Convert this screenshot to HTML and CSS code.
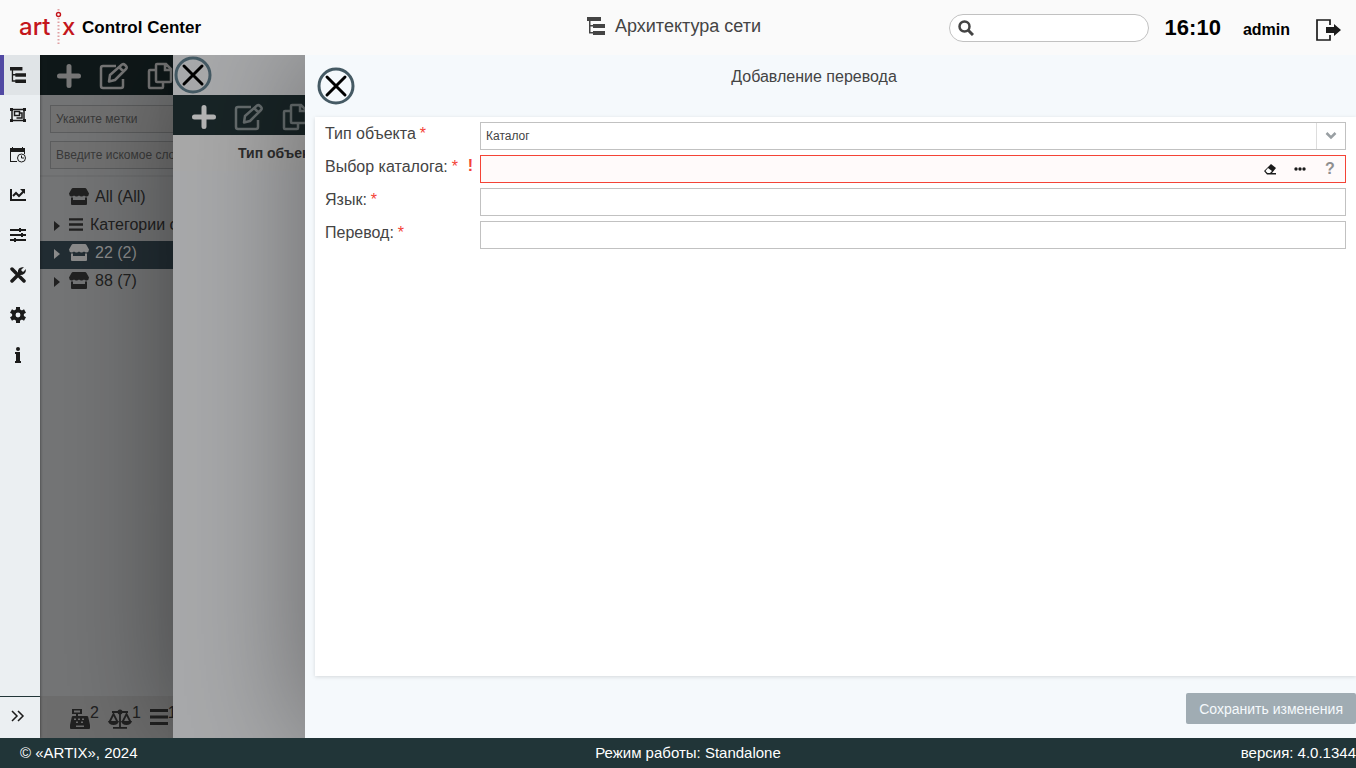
FILE: index.html
```html
<!DOCTYPE html>
<html lang="ru">
<head>
  <meta charset="UTF-8">
  <meta name="viewport" content="width=device-width, initial-scale=1.0">
  <title>Artix Control Center</title>
  <link rel="stylesheet" href="styles.css">
</head>
<body>
  <svg class="sprite" aria-hidden="true">
    <symbol id="i-tree" viewBox="0 0 18 18"><path d="M0 0h14v4H0zM6 7h12v4H6zM6 14h12v4H6zM2 4h1.500v4H6v1.500H3.500V15H6v1.500H2z"/></symbol>
    <symbol id="i-plus" viewBox="0 0 24 24"><path d="M12 2.500v19M2.500 12h19" fill="none" stroke="currentColor" stroke-width="5" stroke-linecap="round"/></symbol>
    <symbol id="i-edit" viewBox="0 0 30 28"><path d="M17 4H4a2 2 0 0 0-2 2v18a2 2 0 0 0 2 2h18a2 2 0 0 0 2-2v-7M11 13 23 2.500q1.500-1 3 .5l1 1q1.500 1.500 0 3L16 18l-6 1.500zM20 5l5 5" fill="none" stroke="currentColor" stroke-width="2.500" stroke-linejoin="round"/></symbol>
    <symbol id="i-copy" viewBox="0 0 26 28"><path d="M10 2h9l5 5v12a1 1 0 0 1-1 1H10a1 1 0 0 1-1-1V3a1 1 0 0 1 1-1zM18 2v6h6M8 8H3a1 1 0 0 0-1 1v16a1 1 0 0 0 1 1h12a1 1 0 0 0 1-1v-4" fill="none" stroke="currentColor" stroke-width="2.500"/></symbol>
    <symbol id="i-close" viewBox="0 0 38 38"><circle cx="19" cy="19" r="17" fill="none" stroke="#455a64" stroke-width="3"/><path d="m10 10 18 18M28 10 10 28" fill="none" stroke="#000" stroke-width="3" stroke-linecap="round"/></symbol>
    <symbol id="i-store" viewBox="0 0 20 17"><path d="M4 0h12q1 0 1.500 1L20 5.500Q20 8 17.500 8.500 16 8.500 15 7.500q-1 1-2.500 1T10 7.500q-1 1-2.500 1T5 7.500q-1 1-2.500 1Q0 8 0 5.500L2.500 1Q3 0 4 0zM2 9.500h2V12h12V9.500h2V16q0 1-1 1H3q-1 0-1-1z"/></symbol>
    <symbol id="i-list" viewBox="0 0 18 16"><path d="M0 0h18v3H0zM0 6.500h18v3H0zM0 13h18v3H0z"/></symbol>
    <symbol id="i-caret" viewBox="0 0 6 10"><path d="M0 0 6 5 0 10z"/></symbol>
  </svg>

  <header class="header">
    <div class="brand">
      <svg class="logo" viewBox="0 0 58 40" role="img" aria-label="artix">
        <text x="-1" y="27" class="logo-text">art</text>
        <text x="42" y="27" class="logo-text">x</text>
        <circle cx="38.500" cy="6.500" r="2" fill="none" stroke="#c4161c" stroke-width="1.400"/>
        <path d="M38.500 1v2M38.500 10v28" stroke="#e0a0a2" stroke-width="2" stroke-dasharray="1.500 2"/>
      </svg>
      <span class="brand-name">Control Center</span>
    </div>
    <h1 class="section-title"><svg width="18" height="18"><use href="#i-tree"/></svg>Архитектура сети</h1>
    <div class="user">
      <label class="search">
        <svg width="16" height="16" viewBox="0 0 16 16"><circle cx="6.500" cy="6.500" r="5" fill="none" stroke="#444" stroke-width="2.500"/><path d="m10 10 5 5" stroke="#444" stroke-width="3"/></svg>
        <input type="search" aria-label="Поиск">
      </label>
      <span class="clock">16:10</span>
      <span class="login">admin</span>
      <button class="logout" type="button" aria-label="Выход">
        <svg width="26" height="22" viewBox="0 0 26 22"><path d="M14 6V1H1v20h13v-5" fill="none" stroke="#1b1b1b" stroke-width="1.700"/><path d="M10 8h8V5l7 6-7 6v-3h-8z"/></svg>
      </button>
    </div>
  </header>

  <main class="workspace">
    <nav class="sidebar">
      <a class="nav-item active" href="#" aria-label="Архитектура сети"><svg width="16" height="16"><use href="#i-tree"/></svg></a>
      <a class="nav-item" href="#" aria-label="Группы"><svg width="16" height="16" viewBox="0 0 16 16"><path d="M2 3v10M14 3v10M3 2.500h10M3 13.500h10" stroke="currentColor" stroke-width="1.500"/><path d="M0 1h3v3H0zM13 1h3v3h-3zM0 12h3v3H0zM13 12h3v3h-3z"/><path d="M4.500 4.500h5v4h-5zM10 6h2v5H6.500" fill="none" stroke="currentColor" stroke-width="1.500"/></svg></a>
      <a class="nav-item" href="#" aria-label="Расписание"><svg width="16" height="16" viewBox="0 0 16 16"><path d="M0 1h2V0h1v1h9V0h1v1h2v4H0zM0 5h1v9h6v1H0zM14 5h1v2h-1z"/><circle cx="11.500" cy="11" r="4" fill="none" stroke="currentColor"/><path d="M11.500 8.500V11h2.500" fill="none" stroke="currentColor"/></svg></a>
      <a class="nav-item" href="#" aria-label="Отчёты"><svg width="16" height="16" viewBox="0 0 16 16"><path d="M1 2v11h15M3 9l3-3 3 3 5-5" fill="none" stroke="currentColor" stroke-width="2"/><path d="M10 2h5v5z"/></svg></a>
      <a class="nav-item" href="#" aria-label="Параметры"><svg width="16" height="16" viewBox="0 0 16 16"><path d="M0 3h16M0 8h16M0 13h16M10 1v4M12 6v4M5 11v4" stroke="currentColor" stroke-width="2"/></svg></a>
      <a class="nav-item" href="#" aria-label="Инструменты"><svg width="16" height="16" viewBox="0 0 16 16"><path d="M2 14 10 6M2 2l4 4M10 10l4 4" stroke="currentColor" stroke-width="3.500" stroke-linecap="round"/><path d="m5 5 6 6" stroke="currentColor" stroke-width="2"/><path d="M8 6q-1-6 6-6l-3 3 2 2 3-3q0 6-6 6z"/></svg></a>
      <a class="nav-item" href="#" aria-label="Настройки"><svg width="16" height="16" viewBox="0 0 16 16"><circle cx="8" cy="8" r="4.200" fill="none" stroke="currentColor" stroke-width="3.500"/><path d="M8 0v3M8 13v3M1 4l3 1.700M12 10.300 15 12M1 12l3-1.700M12 5.700 15 4" stroke="currentColor" stroke-width="4"/></svg></a>
      <a class="nav-item" href="#" aria-label="Информация"><svg width="16" height="16" viewBox="0 0 16 16"><circle cx="8" cy="2" r="2"/><path d="M6 5h4v9h1v2H5v-2h1V7H5V5z"/></svg></a>
      <button class="nav-toggle" type="button" aria-label="Развернуть меню"><svg width="14" height="12" viewBox="0 0 14 12"><path d="m1 1 5 5-5 5M7 1l5 5-5 5" fill="none" stroke="currentColor" stroke-width="1.500"/></svg></button>
    </nav>

    <section class="tree-panel">
      <div class="toolbar">
        <button type="button" aria-label="Добавить"><svg width="24" height="24"><use href="#i-plus"/></svg></button>
        <button type="button" aria-label="Изменить"><svg width="30" height="28"><use href="#i-edit"/></svg></button>
        <button type="button" aria-label="Копировать"><svg width="26" height="28"><use href="#i-copy"/></svg></button>
      </div>
      <div class="filters">
        <input type="text" placeholder="Укажите метки" aria-label="Метки">
        <input type="text" placeholder="Введите искомое слово" aria-label="Поиск по дереву">
      </div>
      <ul class="tree">
        <li><span class="caret"></span><svg class="store" width="20" height="17"><use href="#i-store"/></svg>All (All)</li>
        <li><span class="caret"><svg width="6" height="10"><use href="#i-caret"/></svg></span><svg class="lines" width="14" height="13"><use href="#i-list"/></svg>Категории с</li>
        <li class="selected"><span class="caret"><svg width="6" height="10"><use href="#i-caret"/></svg></span><svg class="store" width="20" height="17"><use href="#i-store"/></svg>22 (2)</li>
        <li><span class="caret"><svg width="6" height="10"><use href="#i-caret"/></svg></span><svg class="store" width="20" height="17"><use href="#i-store"/></svg>88 (7)</li>
      </ul>
      <div class="counters">
        <span><svg width="20" height="20" viewBox="0 0 20 20"><path fill-rule="evenodd" d="M2 0h10v5H8v2h9q1 0 1.200 1L20 16v3q0 1-1 1H1q-1 0-1-1v-3l1.800-8Q2 7 3 7h3V5H2zM4 1.500v2h6v-2zM4 9.500v1.500h2V9.500zM8 9.500v1.500h2V9.500zM12 9.500v1.500h2V9.500zM6 12.500V14h2v-1.500zM11 12.500V14h2v-1.500zM6 16.500V18h8v-1.500z"/></svg>2</span>
        <span><svg width="24" height="20" viewBox="0 0 24 20"><path d="M4 3h16M12 1v17M5 18.800h14M1.500 13 5.500 5l4 8M14.500 13l4-8 4 8" fill="none" stroke="currentColor" stroke-width="1.800"/><circle cx="12" cy="3" r="2.500"/><path d="M0 12h11q-1 4-5.500 4T0 12zM13 12h11q-1 4-5.500 4T13 12z"/></svg>1</span>
        <span><svg width="18" height="16"><use href="#i-list"/></svg>1</span>
      </div>
    </section>

    <section class="drawer translations">
      <button class="close" type="button" aria-label="Закрыть"><svg width="38" height="38"><use href="#i-close"/></svg></button>
      <div class="toolbar">
        <button type="button" aria-label="Добавить"><svg width="24" height="24"><use href="#i-plus"/></svg></button>
        <button class="dim" type="button" aria-label="Изменить"><svg width="30" height="28"><use href="#i-edit"/></svg></button>
        <button class="dim" type="button" aria-label="Копировать"><svg width="26" height="28"><use href="#i-copy"/></svg></button>
      </div>
      <div class="grid-head">Тип объекта</div>
    </section>

    <form class="drawer editor">
      <div class="editor-head">
        <button class="close" type="button" aria-label="Закрыть"><svg width="38" height="38"><use href="#i-close"/></svg></button>
        <h2>Добавление перевода</h2>
      </div>
      <div class="fields">
        <div class="row">
          <label for="type">Тип объекта<i>*</i></label>
          <div class="field">
            <select id="type"><option>Каталог</option></select>
            <span class="trigger"><svg width="12" height="8" viewBox="0 0 12 8"><path d="m1.500 1 4.500 4.500L10.500 1" fill="none" stroke="#999fa3" stroke-width="2.500"/></svg></span>
          </div>
        </div>
        <div class="row">
          <label for="catalog">Выбор каталога:<i>*</i><b>!</b></label>
          <div class="field invalid">
            <input id="catalog" type="text">
            <button type="button" aria-label="Очистить"><svg width="12" height="11" viewBox="0 0 12 11"><path d="m7 0 5 4-4 5h4v1.500H3L0 7z"/><path d="M4 4 1.500 7l2 2H6l2-2z" fill="#fff"/></svg></button>
            <button type="button" aria-label="Выбрать"><svg width="12" height="4" viewBox="0 0 12 4"><circle cx="2" cy="2" r="1.700"/><circle cx="6" cy="2" r="1.700"/><circle cx="10" cy="2" r="1.700"/></svg></button>
            <button class="help" type="button">?</button>
          </div>
        </div>
        <div class="row">
          <label for="lang">Язык:<i>*</i></label>
          <div class="field"><input id="lang" type="text"></div>
        </div>
        <div class="row">
          <label for="translation">Перевод:<i>*</i></label>
          <div class="field"><input id="translation" type="text"></div>
        </div>
      </div>
      <div class="actions"><button class="save" type="submit" disabled>Сохранить изменения</button></div>
    </form>
  </main>

  <footer class="footer">
    <span>© «ARTIX», 2024</span>
    <span>Режим работы: Standalone</span>
    <span>версия: 4.0.1344</span>
  </footer>
</body>
</html>
```
FILE: styles.css
```css
* { box-sizing: border-box; }
body {
  margin: 0;
  height: 100vh;
  display: flex;
  flex-direction: column;
  overflow: hidden;
  font: 16px/20px "Liberation Sans", Arial, sans-serif;
  color: #444;
  background: #fafafa;
}
button { padding: 0; border: 0; background: none; color: inherit; font: inherit; display: flex; align-items: center; justify-content: center; }
input, select { font: inherit; color: inherit; border: 0; outline: 0; background: none; }
svg { fill: currentColor; flex: none; display: block; }
.sprite { position: absolute; width: 0; height: 0; }

/* header */
.header { height: 55px; flex: none; display: grid; grid-template-columns: 1fr auto 1fr; align-items: center; background: #fafafa; }
.brand { display: flex; align-items: center; gap: 4px; padding-left: 20px; }
.logo { width: 58px; height: 40px; overflow: visible; }
.logo-text { font: 500 24px Inter, sans-serif; fill: #c4161c; }
.brand-name { font: bold 17px/24px "Liberation Sans", Arial, sans-serif; color: #000; }
.section-title { display: flex; align-items: center; gap: 10px; margin: 0; padding: 0 8px 4px 0; font-size: 18px; font-weight: normal; }
.user { display: flex; align-items: center; justify-content: flex-end; padding-right: 14px; color: #000; font-weight: bold; }
.search { display: flex; align-items: center; width: 200px; height: 28px; padding: 0 8px; border: 1px solid #c1c1c1; border-radius: 14px; background: #fff; }
.search input { flex: 1; min-width: 0; }
.clock { margin-left: 16px; font-size: 22px; }
.login { margin: 5px 26px 0 22px; }
.logout { margin-top: 4px; color: #1b1b1b; }

.workspace { flex: 1; min-height: 0; display: flex; overflow: hidden; }

/* sidebar */
.sidebar { width: 40px; flex: none; display: flex; flex-direction: column; background: #ebeff2; color: #1b1b1b; z-index: 4; box-shadow: 0 0 3px #0008; clip-path: inset(0 -3px 0 0); }
.nav-item { height: 40px; display: flex; align-items: center; padding-left: 10px; color: inherit; }
.nav-item.active { border-left: 4px solid #5149a3; padding-left: 6px; background: #e0e4e7; }
.nav-toggle { height: 42px; margin-top: auto; padding: 0 4px 4px 0; border-top: 1px solid #213538; }

/* network tree */
.tree-panel { width: 133px; flex: none; display: flex; flex-direction: column; overflow: hidden; background: #747576; color: #212121; white-space: nowrap; }
.toolbar { height: 40px; flex: none; display: flex; align-items: center; gap: 18px; padding: 2px 0 0 17px; overflow: hidden; background: #0f1819; color: #777; }
.filters { display: flex; flex-direction: column; gap: 8px; padding: 10px 0 6px 10px; border-bottom: 2px solid #6e6f70; }
.filters input { width: 200px; height: 28px; padding: 0 5px; border: 1px solid #5c5d5e; background: #727272; font-size: 12px; }
.filters input::placeholder { color: #3a3a3a; opacity: 1; }
.tree { list-style: none; margin: 0; padding: 8px 0 0; }
.tree li { height: 28px; display: flex; align-items: center; padding: 0 0 4px 14px; }
.tree .selected { background: #222d33; color: #8b8b8b; }
.caret { width: 15px; flex: none; padding-top: 2px; }
.store { margin: 0 6px 2px 0; }
.lines { margin: 0 7px 2px 0; }
.counters { height: 42px; flex: none; display: flex; gap: 9px; margin-top: auto; padding: 7px 0 0 30px; background: #6d6d6d; }
.counters span { display: flex; }
.counters svg { margin-top: 6px; }

/* drawers */
.drawer { position: relative; display: flex; flex-direction: column; box-shadow: 0 0 120px #0006; }
.translations { width: 132px; flex: none; z-index: 1; background: #a8a9ab; }
.translations .close { width: 38px; height: 40px; margin-left: 1px; }
.translations .toolbar { background: #182426; color: #b5b5b5; padding: 4px 0 0 19px; }
.toolbar .dim { color: #666d6e; }
.grid-head { height: 36px; padding-left: 65px; line-height: 36px; font-size: 14px; font-weight: bold; color: #2e2e2e; background: #a9a9a9; overflow: hidden; white-space: nowrap; }
.editor { flex: 1; min-width: 0; z-index: 2; background: #f5f9fc; }
.editor-head { height: 62px; flex: none; display: grid; grid-template-columns: 50px 1fr; padding: 12px 0 0 12px; }
.editor-head .close { width: 38px; height: 38px; }
.editor h2 { margin: 0; padding-right: 95px; text-align: center; font-size: 16px; line-height: 20px; font-weight: normal; }
.fields { flex: 1; margin-left: 10px; padding: 5px 10px; display: flex; flex-direction: column; gap: 5px; background: #fff; box-shadow: 0 1px 4px #0002; }
.row { display: flex; }
.row label { width: 155px; position: relative; line-height: 24px; }
.row i { margin-left: 4px; color: #f44336; font-style: normal; }
.row b { position: absolute; right: 7px; top: -1px; color: #f44336; }
.field { flex: 1; height: 28px; display: flex; align-items: stretch; position: relative; border: 1px solid #c1c1c1; }
.field input, .field select { flex: 1; min-width: 0; padding: 0 5px; appearance: none; font-size: 12px; }
.trigger { position: absolute; top: 0; right: 0; width: 29px; height: 26px; display: flex; align-items: center; justify-content: center; border-left: 1px solid #ddd; pointer-events: none; }
.field button { width: 30px; color: #1b1b1b; }
.field .help { color: #8f8f8f; font-weight: bold; }
.invalid { border-color: #f44336; background: #fffafa; }
.actions { height: 62px; flex: none; display: flex; align-items: flex-start; justify-content: flex-end; padding-top: 17px; }
.save { height: 31px; padding: 0 13px; border-radius: 2px; background: #a0acb3; color: #f5f9fc; font-size: 14px; }

.footer { height: 30px; flex: none; display: grid; grid-template-columns: 1fr auto 1fr; align-items: center; padding-left: 20px; background: #213538; color: #fff; font-size: 15px; }
.footer span:last-child { text-align: right; }
```
